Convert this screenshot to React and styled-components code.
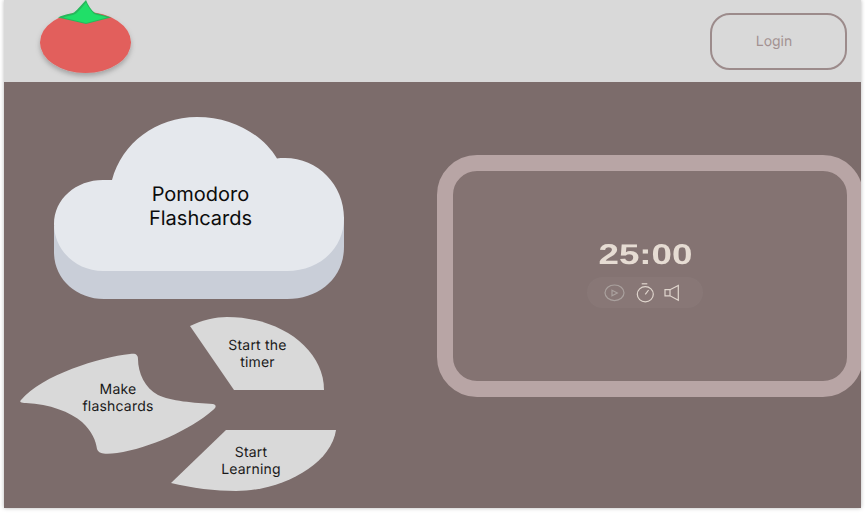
import React from "react";
import styled, { createGlobalStyle } from "styled-components";

const Global = createGlobalStyle`
  html, body { margin: 0; padding: 0; background: #fff; }
  body { width: 865px; height: 516px; overflow: hidden; font-family: Inter, "Liberation Sans", sans-serif; text-rendering: geometricPrecision; }
`;

const Frame = styled.div`
  width: 857px;
  height: 508px;
  margin-left: 4px;
  display: flex;
  flex-direction: column;
  overflow: hidden;
  box-shadow: 0 0 4px rgba(0, 0, 0, 0.28);
`;

const Header = styled.header`
  height: 82px;
  flex: none;
  background: #d9d9d9;
  display: flex;
  align-items: flex-start;
  justify-content: space-between;
`;

const Logo = styled.svg`
  width: 100px;
  height: 82px;
  margin-left: 27px;
  overflow: visible;
`;

const LoginButton = styled.button`
  width: 137px;
  height: 57px;
  margin: 13px 14px 0 0;
  padding: 0 9px 1px 0;
  box-sizing: border-box;
  background: transparent;
  border: 2px solid #9c8b8b;
  border-radius: 20px;
  color: #a39292;
  font: 400 14px/17px Inter, sans-serif;
  text-rendering: geometricPrecision;
`;

const Main = styled.main`
  flex: 1;
  background: #7c6c6b;
  display: flex;
  min-height: 0;
`;

const LeftColumn = styled.section`
  width: 433px;
  flex: none;
  display: flex;
  flex-direction: column;
  padding-top: 35px;
  box-sizing: border-box;
`;

const Cloud = styled.div`
  display: grid;
  width: 290px;
  height: 182px;
  margin-left: 50px;
  & > * { grid-area: 1 / 1; }
`;

const CloudShape = styled.svg`
  width: 290px;
  height: 182px;
`;

const CloudTitle = styled.h1`
  margin: 0;
  align-self: center;
  justify-self: center;
  padding: 0 0 4px 3px;
  font: 400 20px/24px Inter, sans-serif;
  color: #0c0c0c;
  text-align: center;
  z-index: 1;
`;

const Petals = styled.nav`
  display: grid;
  margin: 18px 0 0 16px;
  grid-template-columns: 151px 45px 120px;
  grid-template-rows: 36px 37px 40px 24px 37px;
`;

const Petal = styled.div`
  grid-column: ${(p) => p.$col};
  grid-row: ${(p) => p.$row};
  margin-left: ${(p) => p.$indent || 0}px;
  width: ${(p) => p.$w}px;
  height: ${(p) => p.$h}px;
  padding: ${(p) => p.$pad || "1px 0 0"};
  box-sizing: border-box;
  background: #d9d9d9;
  clip-path: path("${(p) => p.$shape}");
  display: flex;
  align-items: center;
  justify-content: center;
  text-align: center;
  font: 400 14px/17px Inter, sans-serif;
  letter-spacing: 0.2px;
  color: #1a1a1a;
`;

const RightColumn = styled.section`
  flex: 1;
  min-width: 0;
  padding-top: 73px;
`;

const TimerCard = styled.div`
  width: 426px;
  height: 242px;
  box-sizing: border-box;
  border: 16px solid #b8a5a5;
  border-radius: 40px;
  background: #847372;
  display: flex;
  flex-direction: column;
  align-items: center;
  padding: 68px 10px 0 0;
`;

const TimeText = styled.div`
  font: 700 28.5px/33px "Liberation Sans", sans-serif;
  color: #e6dcd3;
  transform: scaleX(1.29);
`;

const Controls = styled.div`
  width: 116px;
  height: 31px;
  margin-top: 5px;
  border-radius: 16px;
  background: rgba(255, 255, 255, 0.035);
  display: flex;
  align-items: center;
  padding-left: 16px;
  box-sizing: border-box;
  gap: 9px;
`;

const ControlIcon = styled.svg`
  width: ${(p) => p.$w}px;
  height: 22px;
  flex: none;
  margin-left: ${(p) => p.$shift || 0}px;
  fill: none;
  stroke: ${(p) => p.$c};
  stroke-width: 1.2;
`;

export default function App() {
  return (
    <>
      <Global />
      <Frame>
        <Header>
          <Logo viewBox="0 0 100 82">
            <defs>
              <filter id="sh" x="-20%" y="-20%" width="140%" height="150%">
                <feDropShadow dx="0" dy="3" stdDeviation="2.5" floodColor="#000" floodOpacity="0.25" />
              </filter>
            </defs>
            <ellipse cx="54.5" cy="42.5" rx="45.5" ry="30.5" fill="#e25f5c" filter="url(#sh)" />
            <path d="M27 17.5 C34 14 40 14 43 12.5 C47 9 51 4 55 0 C57 5 60 10 64 13 C69 14 74 15.5 80 17.5 L55 24 Z" fill="#27b85c" />
            <path d="M32 17.5 C38 15.5 42 15.5 45 13.5 C49 10 52 6 55 2.5 C57 7 60 11 63 14 C67 15.5 72 16 76 17.5 L55 23 Z" fill="#20df68" />
          </Logo>
          <LoginButton>Login</LoginButton>
        </Header>
        <Main>
          <LeftColumn>
            <Cloud>
              <CloudShape viewBox="0 0 290 182">
                <path
                  d="M0 109 V135 C0 162 22 182 50 182 H233 C265 182 290 161 290 130 V100 Z"
                  fill="#c9ced8"
                />
                <path
                  d="M58 63 C68 26 102 0 143 0 C178 0 208 17 223 41.5 C225 41 228 41 231 41 C264 41 290 68 290 101 C290 132 265 154 233 154 H49 C22 154 0 133 0 107 C0 82 22 63 49 63 Z"
                  fill="#e5e8ed"
                />
              </CloudShape>
              <CloudTitle>Pomodoro<br />Flashcards</CloudTitle>
            </Cloud>
            <Petals>
              <Petal
                $col="2 / 4"
                $row="1 / 3"
                $indent={19}
                $w={135}
                $h={73}
                $shape="M0 9 C12 3 26 0 37 0 C90 0 134 32 134 73 L44 73 Z"
              >
                Start the<br />timer
              </Petal>
              <Petal
                $col="1 / 3"
                $row="2 / 5"
                $w={196}
                $h={101}
                $pad="0 0 12px"
                $shape="M1 47 C22 22 80 4 110 1 C116 0 118 2 118 6 C118 20 125 35 138 42 C150 48 175 50 193 51 C197 52 196 55 193 57 C170 77 130 95 97 100 C88 101 79 102 77 96 C76 88 72 78 62 69 C50 59 30 51 6 50 C1 50 -1 49 1 47 Z"
              >
                Make<br />flashcards
              </Petal>
              <Petal
                $col="2 / 4"
                $row="4 / 6"
                $w={165}
                $h={61}
                $pad="1px 5px 0 0"
                $shape="M55 0 L165 0 C160 35 110 61 65 61 C45 61 20 58 0 53 Z"
              >
                Start<br />Learning
              </Petal>
            </Petals>
          </LeftColumn>
          <RightColumn>
            <TimerCard>
              <TimeText>25:00</TimeText>
              <Controls>
                <ControlIcon $w={22} $c="#aaa19e" viewBox="0 0 22 22">
                  <ellipse cx="11.5" cy="10.8" rx="9.5" ry="7.8" />
                  <path d="M9 8.2 L14.3 11 L9 13.8 Z" />
                </ControlIcon>
                <ControlIcon $w={22} $c="#e0d6ce" viewBox="0 0 22 22">
                  <path d="M7.7 1.8 H13.3" />
                  <ellipse cx="11.3" cy="12.3" rx="8" ry="7.6" />
                  <path d="M11.3 12.3 L14.6 8" />
                </ControlIcon>
                <ControlIcon $w={16} $shift={-2} $c="#e0d6ce" viewBox="0 0 16 22">
                  <path d="M2 7.7 H7 L15.3 3.5 V18.2 L7 13.8 H2 Z" />
                  <path d="M7 7.7 V13.8" />
                </ControlIcon>
              </Controls>
            </TimerCard>
          </RightColumn>
        </Main>
      </Frame>
    </>
  );
}
